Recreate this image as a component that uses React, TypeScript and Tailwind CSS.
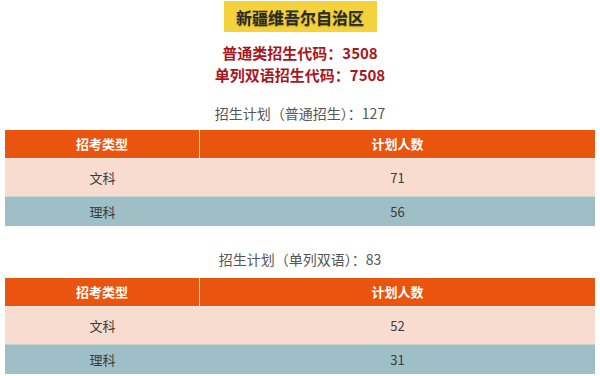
import React from 'react';

const font = { fontFamily: '"Noto Sans CJK SC", "Noto Sans", sans-serif' };

interface PlanTableProps {
  rows: { type: string; count: number }[];
}

function PlanTable({ rows }: PlanTableProps) {
  return (
    <div className="mx-[5px] w-[590px] text-[13px]">
      <div className="flex h-[28px] bg-[#e9550e] text-white font-bold">
        <div className="w-[195px] flex items-center justify-center border-r border-[#f6d9c8]">招考类型</div>
        <div className="flex-1 flex items-center justify-center">计划人数</div>
      </div>
      <div className="flex h-[38px] bg-[#f7dccf] text-[#3b3b3b] border-t border-[#f3e6de]">
        <div className="w-[195px] flex items-center justify-center">{rows[0].type}</div>
        <div className="flex-1 flex items-center justify-center">{rows[0].count}</div>
      </div>
      <div className="flex h-[30px] bg-[#9ebfc6] text-[#3b3b3b] border-t border-[#c9d3d2]">
        <div className="w-[195px] flex items-center justify-center">{rows[1].type}</div>
        <div className="flex-1 flex items-center justify-center">{rows[1].count}</div>
      </div>
    </div>
  );
}

export default function App() {
  return (
    <div className="w-[600px] h-[376px] bg-white overflow-hidden flex flex-col items-center" style={font}>
      <div className="mt-[1px] w-[153px] h-[31px] bg-[#f3d23c] flex items-center justify-center">
        <span className="text-[16px] font-bold text-[#2a2a2a] [text-shadow:0_1px_1px_rgba(0,0,0,0.35)]">新疆维吾尔自治区</span>
      </div>

      <div className="mt-[10px] text-[15px] font-bold text-[#a8161d] leading-[22px] text-center">
        <div>普通类招生代码：3508</div>
        <div>单列双语招生代码：7508</div>
      </div>

      <div className="mt-[17px] text-[14px] text-[#555] leading-[20px]">招生计划（普通招生）：127</div>
      <div className="mt-[7px] self-start">
        <PlanTable rows={[{ type: '文科', count: 71 }, { type: '理科', count: 56 }]} />
      </div>

      <div className="mt-[23px] text-[14px] text-[#555] leading-[20px]">招生计划（单列双语）：83</div>
      <div className="mt-[9px] self-start">
        <PlanTable rows={[{ type: '文科', count: 52 }, { type: '理科', count: 31 }]} />
      </div>
    </div>
  );
}
